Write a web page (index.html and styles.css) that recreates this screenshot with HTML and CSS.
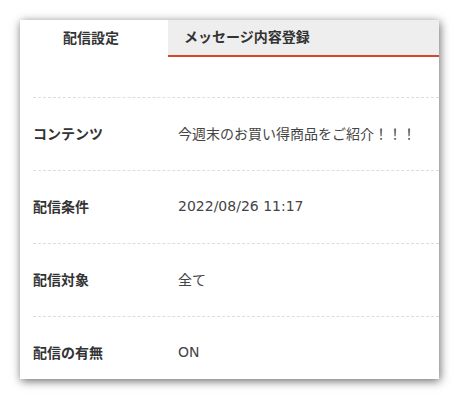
FILE: index.html
```html
<!DOCTYPE html>
<html lang="ja">
	<head>
		<meta charset="UTF-8"/>
		<title>配信設定</title>
		<link rel="stylesheet" href="styles.css">
	</head>
	<body>
		<div class="Panel">
			<div class="TabBar">
				<div class="Tab TabActive">配信設定</div>
				<div class="Tab TabOther">メッセージ内容登録</div>
			</div>
			<div class="SettingList">
				<div class="SettingRow">
					<div class="SettingLabel">コンテンツ</div>
					<div class="SettingValue">今週末のお買い得商品をご紹介！！！</div>
				</div>
				<div class="SettingRow">
					<div class="SettingLabel">配信条件</div>
					<div class="SettingValue">2022/08/26 11:17</div>
				</div>
				<div class="SettingRow">
					<div class="SettingLabel">配信対象</div>
					<div class="SettingValue">全て</div>
				</div>
				<div class="SettingRow">
					<div class="SettingLabel">配信の有無</div>
					<div class="SettingValue">ON</div>
				</div>
			</div>
		</div>
	</body>
</html>
```

FILE: styles.css
```css
body {
	margin: 0;
	padding: 20px;
	background-color: #fff;
	font-family: "DejaVu Sans", "Noto Sans CJK JP", sans-serif;
	font-size: 14px;
	color: #333;
}

.Panel {
	width: 419px;
	height: 359px;
	overflow: hidden;
	background-color: #fff;
	box-shadow: 1px 2px 9px rgba(0, 0, 0, .6);
}

.TabBar {
	display: flex;
	height: 37px;
}

.Tab {
	display: flex;
	align-items: center;
	padding-bottom: 4px;
	font-weight: bold;
	box-sizing: border-box;
}

.TabActive {
	width: 148px;
	justify-content: center;
	padding-right: 6px;
}

.TabOther {
	flex: 1;
	padding-left: 16px;
	background-color: #eee;
	border-bottom: 2px solid #d8462a;
}

.SettingList {
	margin-top: 40px;
	margin-left: 13px;
}

.SettingRow {
	display: flex;
	align-items: center;
	box-sizing: border-box;
	height: 73px;
	padding-bottom: 3px;
	border-top: 1px dashed #ddd;
}

.SettingLabel {
	width: 145px;
	font-weight: bold;
}

.SettingValue {
	color: #444;
}
```
